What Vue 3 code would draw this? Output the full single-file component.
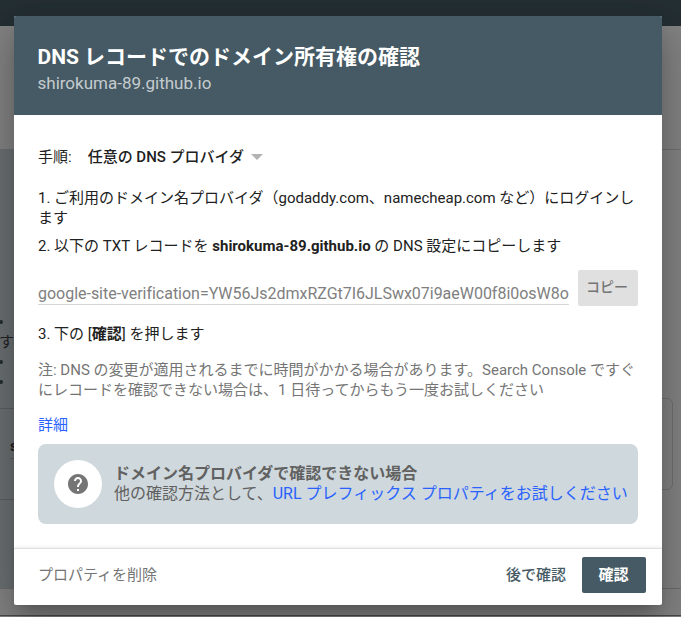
<script setup>
const provider = '任意の DNS プロバイダ'
const token = 'google-site-verification=YW56Js2dmxRZGt7I6JLSwx07i9aeW00f8i0osW8o'
</script>

<template>
  <div class="screen">
    <div class="page" aria-hidden="true">
      <div class="topbar"></div>
      <div class="subbar"></div>
      <div class="content">
        <div class="panel">
          <div class="bullet"></div>
          <div class="snippet">すべ</div>
          <div class="bullet"></div>
          <div class="bullet second"></div>
          <div class="field"><div>s</div></div>
        </div>
        <div class="side"><div class="card"></div></div>
      </div>
      <div class="bottom"></div>
    </div>

    <section class="dialog" role="dialog">
      <header class="head">
        <h1>DNS レコードでのドメイン所有権の確認</h1>
        <p>shirokuma-89.github.io</p>
      </header>
      <main class="body">
        <div class="method">
          <span>手順:</span>
          <span class="select">{{ provider }}</span>
          <svg class="caret" viewBox="0 0 12 6"><path d="M0 0h12L6 6z" /></svg>
        </div>
        <p class="step one">1. ご利用のドメイン名プロバイダ（godaddy.com、namecheap.com など）にログインし<br />ます</p>
        <p class="step two">2. 以下の TXT レコードを <b>shirokuma-89.github.io</b> の DNS 設定にコピーします</p>
        <div class="record">
          <div class="token">{{ token }}</div>
          <button class="copy">コピー</button>
        </div>
        <p class="step three">3. 下の [<b>確認</b>] を押します</p>
        <p class="note">注: DNS の変更が適用されるまでに時間がかかる場合があります。Search Console ですぐ<br />にレコードを確認できない場合は、1 日待ってからもう一度お試しください</p>
        <a class="more">詳細</a>
        <div class="tip">
          <div class="badge">
            <svg viewBox="0 0 24 24"><path d="M12 2C6.48 2 2 6.48 2 12s4.48 10 10 10 10-4.48 10-10S17.52 2 12 2zm1 17h-2v-2h2v2zm2.07-7.75l-.9.92C13.45 12.9 13 13.5 13 15h-2v-.5c0-1.1.45-2.1 1.17-2.83l1.24-1.26c.37-.36.59-.86.59-1.41 0-1.1-.9-2-2-2s-2 .9-2 2H8c0-2.21 1.79-4 4-4s4 1.79 4 4c0 .88-.36 1.68-.93 2.25z" /></svg>
          </div>
          <div class="tiptext">
            <b>ドメイン名プロバイダで確認できない場合</b>
            <span>他の確認方法として、<a>URL プレフィックス プロパティをお試しください</a></span>
          </div>
        </div>
      </main>
      <footer class="foot">
        <button class="remove">プロパティを削除</button>
        <button class="later">後で確認</button>
        <button class="verify">確認</button>
      </footer>
    </section>
  </div>
</template>

<style>
body {
  margin: 0;
  overflow: hidden;
}
</style>

<style scoped>
* {
  box-sizing: border-box;
}
.screen {
  position: relative;
  width: 681px;
  height: 617px;
  padding: 16px 19px 12px 14px;
  overflow: hidden;
  font-family: Roboto, "Noto Sans CJK JP", sans-serif;
  color: #212121;
}
.page {
  position: absolute;
  inset: 0;
  display: flex;
  flex-direction: column;
  background: #838383;
}
.topbar {
  height: 26px;
  background: #242f34;
}
.subbar {
  height: 124px;
  border-bottom: 1px solid #707070;
}
.content {
  display: flex;
  height: 439px;
  border-bottom: 1px solid #6c6c6c;
}
.panel {
  width: 340px;
  padding-top: 171px;
  margin-top: -1px;
  background: #6b7073;
  font-size: 15px;
}
.bullet {
  width: 4px;
  height: 4px;
  margin-left: -1px;
  border-radius: 2px;
  background: #232d32;
}
.bullet.second {
  margin-top: 16px;
}
.snippet {
  height: 36px;
  line-height: 36px;
  margin-left: -1px;
  color: #232323;
}
.field {
  height: 92px;
  margin-top: 24px;
  padding: 24px 0 0 10px;
  border-top: 1px solid #5b5f61;
  border-bottom: 1px solid #5b5f61;
  font-weight: 700;
}
.field div {
  height: 26px;
  line-height: 26px;
  border-bottom: 1px solid #5b5f61;
}
.side {
  flex: 1;
  padding: 248px 8px 0 0;
}
.card {
  height: 92px;
  border: 1px solid #707070;
  border-radius: 6px;
}
.bottom {
  height: 27px;
  border-bottom: 1px solid #4a4a4a;
}
.dialog {
  position: relative;
  display: flex;
  flex-direction: column;
  height: 589px;
  border-radius: 2px;
  background: #fff;
  box-shadow: 0 11px 15px -7px rgba(0, 0, 0, 0.2), 0 24px 38px 3px rgba(0, 0, 0, 0.14), 0 9px 46px 8px rgba(0, 0, 0, 0.12);
}
.head {
  height: 99px;
  padding: 27px 24px 0 23.5px;
  border-radius: 2px 2px 0 0;
  background: #455a64;
  color: #fff;
}
h1, p {
  margin: 0;
}
h1 {
  height: 28px;
  line-height: 28px;
  font-size: 21px;
  font-weight: 700;
  white-space: nowrap;
}
.head p {
  line-height: 24px;
  font-size: 17px;
  color: rgba(255, 255, 255, 0.7);
}
.body {
  display: flex;
  flex-direction: column;
  height: 433px;
  padding: 30px 24px 0;
  font-size: 15px;
  line-height: 20px;
  white-space: nowrap;
}
.method {
  display: flex;
  align-items: center;
  height: 24px;
}
.select {
  margin-left: 16px;
  font-weight: 500;
}
.caret {
  width: 12px;
  height: 6px;
  margin-left: 7px;
  fill: #b3b3b3;
}
.step b {
  font-weight: 700;
}
.one {
  margin-top: 19px;
}
.two {
  margin-top: 8px;
}
.record {
  display: flex;
  justify-content: space-between;
  margin-top: 14px;
  height: 36px;
}
.token {
  width: 531px;
  height: 35px;
  padding-top: 14px;
  border-bottom: 1px solid #d6d6d6;
  color: #808080;
  font-size: 16px;
  letter-spacing: -0.02px;
  overflow: hidden;
}
button {
  padding: 0;
  border: 0;
  font: 500 15px/20px Roboto, "Noto Sans CJK JP", sans-serif;
  background: none;
  white-space: nowrap;
}
.copy {
  width: 60px;
  padding: 0 2px 2px 0;
  border-radius: 2px;
  background: #e0e0e0;
  color: #757575;
  font-size: 14px;
}
.three {
  margin-top: 18px;
}
.note {
  margin-top: 16px;
  color: #757575;
}
.more {
  margin-top: 15px;
  color: #2962ff;
}
.tip {
  display: flex;
  align-items: center;
  height: 80px;
  margin-top: 9px;
  padding-left: 16px;
  border-radius: 8px;
  background: #cfd8dc;
  color: #616161;
  font-size: 16px;
}
.badge {
  display: grid;
  place-items: center;
  width: 48px;
  height: 48px;
  border-radius: 50%;
  background: #fff;
}
.badge svg {
  width: 24px;
  height: 24px;
  margin-right: 1px;
  fill: #757575;
}
.tiptext {
  display: flex;
  flex-direction: column;
  margin-left: 12px;
  padding-bottom: 1px;
}
.tiptext b {
  font-weight: 700;
}
.tiptext a {
  color: #2962ff;
}
.foot {
  display: flex;
  align-items: center;
  height: 57px;
  padding: 0 16px 4px 24px;
  border-top: 1px solid #e0e0e0;
  box-shadow: 0 -1px 3px rgba(0, 0, 0, 0.08);
}
.remove {
  margin-right: auto;
  color: #757575;
  font-weight: 400;
}
.later {
  margin-right: 16px;
  color: #455a64;
}
.verify {
  width: 64px;
  height: 36px;
  padding-right: 1px;
  border-radius: 2px;
  background: #455a64;
  color: #fff;
  font-weight: 700;
}
</style>
